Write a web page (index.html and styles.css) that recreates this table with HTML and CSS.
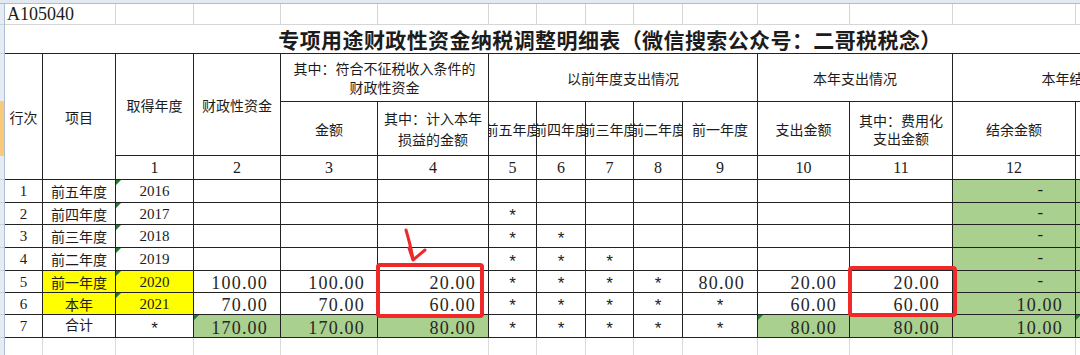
FILE: index.html
```html
<!DOCTYPE html>
<html lang="zh-CN">
<head>
<meta charset="utf-8">
<title>A105040 专项用途财政性资金纳税调整明细表</title>
<link rel="stylesheet" href="styles.css">
</head>
<body>
<div class="screen">
  <div class="colhead"></div>
  <div class="main">
    <div class="rowhead">
      <div class="rh h21"></div>
      <div class="rh h29"></div>
      <div class="rh h48"></div>
      <div class="rh h54 sel"></div>
      <div class="rh h24"></div>
      <div class="rh h23"></div>
      <div class="rh h22"></div>
      <div class="rh h23"></div>
      <div class="rh h23"></div>
      <div class="rh h22"></div>
      <div class="rh h22"></div>
      <div class="rh h23"></div>
      <div class="rh h22"></div>
    </div>
    <table class="sheet">
      <colgroup>
        <col class="w38"><col class="w73"><col class="w78"><col class="w87"><col class="w97"><col class="w111">
        <col class="w48"><col class="w49"><col class="w48"><col class="w49"><col class="w75">
        <col class="w92"><col class="w103"><col class="w123"><col class="w139">
      </colgroup>
      <tr class="row-code">
        <td colspan="2" class="code">A105040</td>
        <td></td><td></td><td></td><td></td><td></td><td></td><td></td><td></td><td></td><td></td><td></td><td></td><td></td>
      </tr>
      <tr class="row-title">
        <td colspan="15" class="title">专项用途财政性资金纳税调整明细表（微信搜索公众号：二哥税税念）</td>
      </tr>
      <tr class="row-head1">
        <td rowspan="3">行次</td>
        <td rowspan="3">项目</td>
        <td rowspan="2">取得年度</td>
        <td rowspan="2">财政性资金</td>
        <td colspan="2" class="lh19">其中：符合不征税收入条件的<br>财政性资金</td>
        <td colspan="5">以前年度支出情况</td>
        <td colspan="2">本年支出情况</td>
        <td colspan="2">本年结余情况</td>
      </tr>
      <tr class="row-head2">
        <td>金额</td>
        <td class="lh21">其中：计入本年<br>损益的金额</td>
        <td><div class="clip">前五年度</div></td>
        <td><div class="clip">前四年度</div></td>
        <td><div class="clip">前三年度</div></td>
        <td><div class="clip">前二年度</div></td>
        <td>前一年度</td>
        <td>支出金额</td>
        <td class="lh18">其中：费用化<br>支出金额</td>
        <td>结余金额</td>
        <td></td>
      </tr>
      <tr class="row-index">
        <td class="idx">1</td><td class="idx">2</td><td class="idx">3</td><td class="idx">4</td>
        <td class="idx">5</td><td class="idx">6</td><td class="idx">7</td><td class="idx">8</td><td class="idx">9</td>
        <td class="idx">10</td><td class="idx">11</td><td class="idx">12</td><td class="idx">13</td>
      </tr>
      <tr class="row-data tall">
        <td class="rn">1</td><td>前五年度</td><td class="yr tri">2016</td>
        <td></td><td></td><td></td>
        <td></td><td></td><td></td><td></td><td></td>
        <td></td><td></td><td class="g dash">-</td><td class="g"></td>
      </tr>
      <tr class="row-data">
        <td class="rn">2</td><td>前四年度</td><td class="yr tri">2017</td>
        <td></td><td></td><td></td>
        <td class="ast">*</td><td></td><td></td><td></td><td></td>
        <td></td><td></td><td class="g dash">-</td><td class="g"></td>
      </tr>
      <tr class="row-data tall">
        <td class="rn">3</td><td>前三年度</td><td class="yr tri">2018</td>
        <td></td><td></td><td></td>
        <td class="ast">*</td><td class="ast">*</td><td></td><td></td><td></td>
        <td></td><td></td><td class="g dash">-</td><td class="g"></td>
      </tr>
      <tr class="row-data tall">
        <td class="rn">4</td><td>前二年度</td><td class="yr tri">2019</td>
        <td></td><td></td><td></td>
        <td class="ast">*</td><td class="ast">*</td><td class="ast">*</td><td></td><td></td>
        <td></td><td></td><td class="g dash">-</td><td class="g"></td>
      </tr>
      <tr class="row-data">
        <td class="rn">5</td><td class="y">前一年度</td><td class="y yr tri">2020</td>
        <td class="num">100.00</td><td class="num">100.00</td><td class="num">20.00</td>
        <td class="ast">*</td><td class="ast">*</td><td class="ast">*</td><td class="ast">*</td><td class="num">80.00</td>
        <td class="num">20.00</td><td class="num">20.00</td><td class="g dash">-</td><td class="g"></td>
      </tr>
      <tr class="row-data">
        <td class="rn">6</td><td class="y">本年</td><td class="y yr tri">2021</td>
        <td class="num">70.00</td><td class="num">70.00</td><td class="num">60.00</td>
        <td class="ast">*</td><td class="ast">*</td><td class="ast">*</td><td class="ast">*</td><td class="ast">*</td>
        <td class="num">60.00</td><td class="num">60.00</td><td class="g num">10.00</td><td class="g"></td>
      </tr>
      <tr class="row-data tall">
        <td class="rn">7</td><td class="top">合计</td><td class="ast">*</td>
        <td class="g num tri">170.00</td><td class="g num">170.00</td><td class="g num">80.00</td>
        <td class="ast">*</td><td class="ast">*</td><td class="ast">*</td><td class="ast">*</td><td class="ast">*</td>
        <td class="g num tri">80.00</td><td class="g num">80.00</td><td class="g num">10.00</td><td class="g tri"></td>
      </tr>
      <tr class="row-blank">
        <td></td><td></td><td></td><td></td><td></td><td></td><td></td><td></td><td></td><td></td><td></td><td></td><td></td><td></td><td></td>
      </tr>
    </table>
  </div>
  <div class="redbox box-a"></div>
  <div class="redbox box-b"></div>
  <svg class="arrow" width="40" height="40" viewBox="0 0 40 40">
    <path d="M11 5 C 13 12, 16 22, 18 34" />
    <path d="M14 23 L 18 35 L 30 25" />
  </svg>
</div>
</body>
</html>
```
FILE: styles.css
```css
* { box-sizing: border-box; }
html, body { margin: 0; padding: 0; background: #fff; }
body {
  width: 1080px;
  height: 355px;
  overflow: hidden;
  font-family: "Noto Sans CJK SC", sans-serif;
  color: #1c1c1c;
}
.screen { position: relative; width: 1080px; height: 355px; overflow: hidden; }

.colhead { height: 4px; background: #e3e9f1; border-bottom: 1px solid #aebfd3; }
.main { display: flex; align-items: flex-start; }

.rowhead {
  flex: 0 0 5px;
  display: flex;
  flex-direction: column;
  background: #e6ecf4;
  border-right: 1px solid #aebfd3;
}
.rh { flex: none; border-bottom: 1px solid #c7d3e2; }
.rh.sel { background: #f8c978; }
.h21 { height: 21px; } .h22 { height: 22px; } .h23 { height: 23px; } .h24 { height: 24px; }
.h29 { height: 29px; } .h48 { height: 48px; } .h54 { height: 54px; }

.sheet {
  flex: none;
  width: 1210px;
  table-layout: fixed;
  border-collapse: separate;
  border-spacing: 0;
}
.w38 { width: 38px; } .w73 { width: 73px; } .w78 { width: 78px; } .w87 { width: 87px; }
.w97 { width: 97px; } .w111 { width: 111px; } .w48 { width: 48px; } .w49 { width: 49px; }
.w75 { width: 75px; } .w92 { width: 92px; } .w103 { width: 103px; } .w123 { width: 123px; }
.w139 { width: 139px; }

.sheet td {
  padding: 0;
  border-right: 1px solid #222;
  border-bottom: 1px solid #222;
  text-align: center;
  vertical-align: middle;
  font-size: 14px;
  line-height: 18px;
  white-space: nowrap;
  overflow: hidden;
}

.row-code { height: 21px; }
.row-code td { border-color: #d6d6d6; }
.row-code td.code {
  text-align: left;
  padding-left: 2px;
  font-family: "Liberation Serif", serif;
  font-size: 18px;
  line-height: 20px;
  vertical-align: bottom;
}
.row-title { height: 29px; }
.row-title td.title {
  border-right: none;
  font-size: 21px;
  font-weight: bold;
  line-height: 26px;
  letter-spacing: 0.4px;
}
.row-head1 { height: 48px; }
.row-head2 { height: 54px; }
.row-index { height: 24px; }
.row-data { height: 22px; }
.row-data.tall { height: 23px; }
.row-data td { line-height: 16px; }
.row-blank { height: 22px; }
.row-blank td { border-right-color: #dadada; border-bottom-color: #dadada; }

.lh19 { line-height: 19px !important; }
.lh21 { line-height: 21px !important; }
.lh18 { line-height: 18px !important; }

.clip {
  display: flex;
  justify-content: center;
  overflow: hidden;
  white-space: nowrap;
}

.idx { font-family: "Liberation Serif", serif; font-size: 16px !important; }
.rn { font-family: "Liberation Serif", serif; font-size: 15px !important; }
.yr { font-family: "Liberation Serif", serif; font-size: 15px !important; }
.sheet td.num {
  font-family: "Liberation Serif", serif;
  font-size: 18px;
  line-height: 16px;
  letter-spacing: 1.2px;
  text-align: right;
  padding-right: 12px;
  padding-top: 3px;
  color: #262626;
}
.sheet td.ast {
  font-family: "Liberation Mono", monospace;
  font-size: 17px;
  line-height: 12px;
  padding-top: 7px;
}
.sheet td.dash {
  font-family: "Liberation Mono", monospace;
  font-size: 16px;
  line-height: 16px;
  text-align: right;
  padding-right: 30px;
}
.sheet td.top { vertical-align: top; line-height: 18px; }

.g { background: #a9d08e; }
.y { background: #ffff00; }

.tri { position: relative; }
.tri::before {
  content: "";
  position: absolute;
  left: 0;
  top: 0;
  border-top: 5px solid #1e7b34;
  border-right: 5px solid transparent;
}

.redbox {
  position: absolute;
  border: 4px solid #f02828;
  border-radius: 4px;
}
.box-a { left: 376px; top: 263px; width: 108px; height: 55px; }
.box-b { left: 848px; top: 266px; width: 109px; height: 51px; }

.arrow {
  position: absolute;
  left: 395px;
  top: 225px;
  fill: none;
  stroke: #ec2a2a;
  stroke-width: 3;
  stroke-linecap: round;
  stroke-linejoin: round;
}
```
